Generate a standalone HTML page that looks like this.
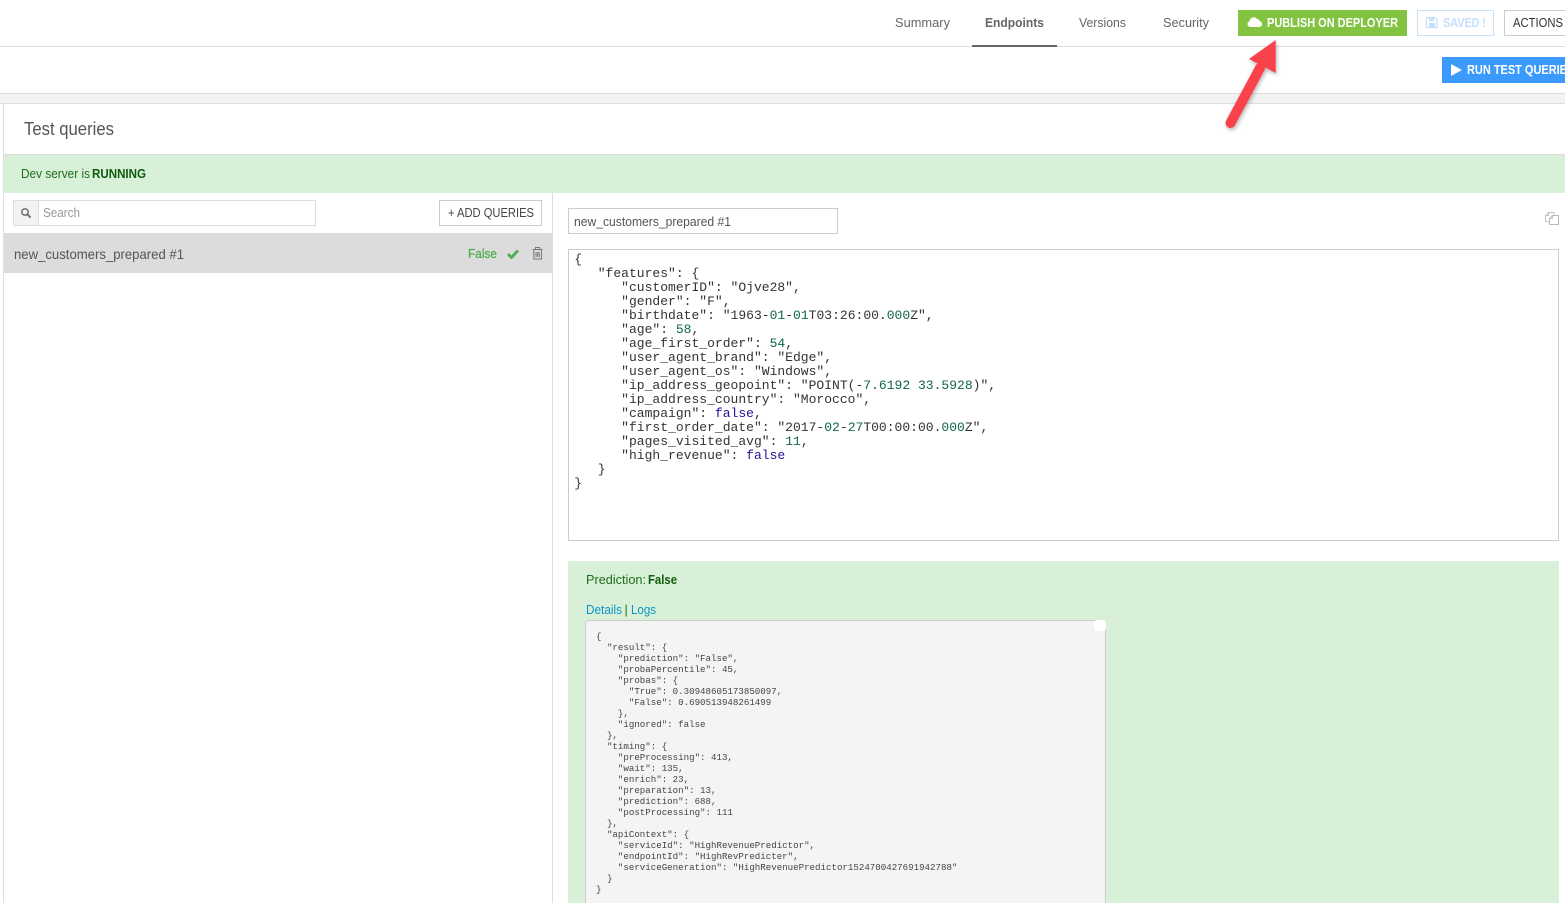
<!DOCTYPE html>
<html><head><meta charset="utf-8"><title>Test queries</title>
<style>
html,body{margin:0;padding:0;background:#fff;width:1565px;height:903px;overflow:hidden}
svg{position:absolute;left:0;top:0}
text{font-family:"Liberation Sans",sans-serif}
pre{position:absolute;margin:0;font-family:"Liberation Mono",monospace}
#a{left:574.3px;top:253px;font-size:13.02px;line-height:14px;color:#333}
#b{left:596px;top:631px;font-size:9.14px;line-height:11px;color:#444}
#a i{font-style:normal;color:#116644}#a b{font-weight:normal;color:#221199}
</style></head><body>
<svg width="1565" height="903" viewBox="0 0 1565 903">
<defs><filter id="s" x="-30%" y="-30%" width="160%" height="160%"><feDropShadow dx="1" dy="2" stdDeviation="2" flood-color="#000" flood-opacity=".3"/></filter></defs>
<!-- header -->
<rect x="0" y="46" width="1565" height="1" fill="#ddd"/>
<rect x="972" y="45" width="85" height="2" fill="#666"/>
<text x="895" y="27" font-size="13" fill="#666" textLength="55" lengthAdjust="spacingAndGlyphs">Summary</text>
<text x="985" y="27" font-size="13" font-weight="bold" fill="#666" textLength="59" lengthAdjust="spacingAndGlyphs">Endpoints</text>
<text x="1079" y="27" font-size="13" fill="#666" textLength="47" lengthAdjust="spacingAndGlyphs">Versions</text>
<text x="1163" y="27" font-size="13" fill="#666" textLength="46" lengthAdjust="spacingAndGlyphs">Security</text>
<rect x="1238" y="10" width="169" height="26" fill="#82c341"/>
<path d="M1250.500 27a3 3 0 0 1-.8-5.900 4 4 0 0 1 7.300-2 2.600 2.600 0 0 1 2.700 2.200 2.900 2.900 0 0 1-.2 5.700z" fill="#fff"/>
<text x="1267" y="27" font-size="13" font-weight="bold" fill="#fff" textLength="131" lengthAdjust="spacingAndGlyphs">PUBLISH ON DEPLOYER</text>
<rect x="1417.500" y="10.500" width="76" height="25" fill="#fff" stroke="#c9e2fb"/>
<path d="M1426.500 17.500h8.500l2 2v8h-10.500z" fill="none" stroke="#c4dffb" stroke-width="1.200"/>
<path d="M1429 18h5v3h-5zM1429 23h6v4h-6z" fill="#c4dffb"/>
<text x="1443" y="27" font-size="13" font-weight="bold" fill="#c4dffb" textLength="43" lengthAdjust="spacingAndGlyphs">SAVED !</text>
<rect x="1504.500" y="10.500" width="70" height="25" fill="#fff" stroke="#ccc"/>
<text x="1513" y="27" font-size="13" fill="#333" textLength="50" lengthAdjust="spacingAndGlyphs">ACTIONS</text>
<rect x="1442" y="57" width="123" height="26" fill="#3b9bfc"/>
<path d="M1451 64l11 6-11 6z" fill="#fff"/>
<text x="1467" y="74" font-size="13" font-weight="bold" fill="#fff" textLength="100" lengthAdjust="spacingAndGlyphs">RUN TEST QUERIE</text>
<!-- band -->
<rect x="0" y="93" width="1565" height="11" fill="#f2f2f2"/>
<rect x="0" y="93" width="1565" height="1" fill="#ddd"/>
<rect x="0" y="103" width="1565" height="1" fill="#ddd"/>
<!-- panel -->
<rect x="3" y="103" width="1" height="800" fill="#ddd"/>
<text x="24" y="135" font-size="18" fill="#555" textLength="90" lengthAdjust="spacingAndGlyphs">Test queries</text>
<rect x="4" y="154" width="1561" height="1" fill="#ddd"/>
<rect x="4" y="155" width="1561" height="38" fill="#d9f0d8"/>
<text x="21" y="178" font-size="12.500" fill="#1e6f1e" textLength="69" lengthAdjust="spacingAndGlyphs">Dev server is</text>
<text x="92" y="178" font-size="12.500" font-weight="bold" fill="#0f5c0f" textLength="54" lengthAdjust="spacingAndGlyphs">RUNNING</text>
<!-- left col -->
<rect x="552" y="193" width="1" height="710" fill="#ddd"/>
<rect x="13.500" y="200.500" width="302" height="25" fill="#fff" stroke="#ddd"/>
<rect x="14" y="201" width="24" height="24" fill="#f2f2f2"/>
<rect x="38" y="201" width="1" height="24" fill="#ddd"/>
<circle cx="25" cy="212" r="3.200" fill="none" stroke="#666" stroke-width="1.400"/>
<path d="M27.400 214.400l3.200 3.200" stroke="#666" stroke-width="1.700"/>
<text x="43" y="217" font-size="12.500" fill="#999" textLength="37" lengthAdjust="spacingAndGlyphs">Search</text>
<rect x="439.500" y="200.500" width="102" height="25" fill="#fff" stroke="#ccc"/>
<text x="448" y="217" font-size="13" fill="#444" textLength="86" lengthAdjust="spacingAndGlyphs">+ ADD QUERIES</text>
<rect x="4" y="233" width="548" height="40" fill="#dcdcdc"/>
<text x="14" y="259" font-size="14" fill="#555" textLength="170" lengthAdjust="spacingAndGlyphs">new_customers_prepared #1</text>
<text x="468" y="258" font-size="13" fill="#4caf50" stroke="#4caf50" stroke-width=".25" textLength="29" lengthAdjust="spacingAndGlyphs">False</text>
<path d="M508 254l3.500 3.500 6.500-7" fill="none" stroke="#4caf50" stroke-width="2.800"/>
<path d="M532.700 249.500h10M535.500 249.500v-2h4.200v2M533.800 250v9h7.600v-9M536 252v5M537.600 252v5M539.200 252v5" fill="none" stroke="#777" stroke-width="1"/>
<!-- right col -->
<rect x="568.500" y="208.500" width="269" height="25" fill="#fff" stroke="#ccc"/>
<text x="574" y="226" font-size="12.500" fill="#555" textLength="157" lengthAdjust="spacingAndGlyphs">new_customers_prepared #1</text>
<path d="M1545.500 221.500v-6l3-3h5.500v9.500z" fill="#fff" stroke="#c4c4c4" stroke-width="1"/>
<path d="M1549.500 224.500v-6l3-3h6v9z" fill="#fff" stroke="#b8b8b8" stroke-width="1"/>
<path d="M1552.500 215.500v3h-3M1548.500 212.500v3h-3" fill="none" stroke="#c4c4c4" stroke-width="1"/>
<rect x="568.500" y="249.500" width="990" height="291" fill="#fff" stroke="#ccc"/>
<rect x="568" y="561" width="991" height="342" fill="#d9f0d8"/>
<text x="586" y="584" font-size="12.500" fill="#1e6f1e" textLength="60" lengthAdjust="spacingAndGlyphs">Prediction:</text>
<text x="648" y="584" font-size="12.500" font-weight="bold" fill="#0f5c0f" textLength="29" lengthAdjust="spacingAndGlyphs">False</text>
<text x="586" y="614" font-size="12.500" fill="#0a94c9" textLength="36" lengthAdjust="spacingAndGlyphs">Details</text>
<text x="624.500" y="614" font-size="12.500" fill="#1e6f1e">|</text>
<text x="631" y="614" font-size="12.500" fill="#0a94c9" textLength="25" lengthAdjust="spacingAndGlyphs">Logs</text>
<rect x="585.500" y="620.500" width="520" height="300" rx="3" fill="#f4f4f4" stroke="#ccc"/>
<rect x="1094" y="620" width="12" height="11" rx="3" fill="#fff"/>
<!-- arrow -->
<g filter="url(#s)">
<path d="M1230.500 123L1260 68" stroke="#f9424a" stroke-width="10" stroke-linecap="round" fill="none"/>
<path d="M1275.700 40L1249 59l26.700 14z" fill="#f9424a"/>
</g>
</svg>
<pre id="a">{
   "features": {
      "customerID": "Ojve28",
      "gender": "F",
      "birthdate": "1963-<i>01</i>-<i>01</i>T03:26:00.<i>000</i>Z",
      "age": <i>58</i>,
      "age_first_order": <i>54</i>,
      "user_agent_brand": "Edge",
      "user_agent_os": "Windows",
      "ip_address_geopoint": "POINT(-<i>7.6192</i> <i>33.5928</i>)",
      "ip_address_country": "Morocco",
      "campaign": <b>false</b>,
      "first_order_date": "2017-<i>02</i>-<i>27</i>T00:00:00.<i>000</i>Z",
      "pages_visited_avg": <i>11</i>,
      "high_revenue": <b>false</b>
   }
}</pre>
<pre id="b">{
  "result": {
    "prediction": "False",
    "probaPercentile": 45,
    "probas": {
      "True": 0.30948605173850097,
      "False": 0.690513948261499
    },
    "ignored": false
  },
  "timing": {
    "preProcessing": 413,
    "wait": 135,
    "enrich": 23,
    "preparation": 13,
    "prediction": 688,
    "postProcessing": 111
  },
  "apiContext": {
    "serviceId": "HighRevenuePredictor",
    "endpointId": "HighRevPredicter",
    "serviceGeneration": "HighRevenuePredictor1524700427691942788"
  }
}</pre>
</body></html>
